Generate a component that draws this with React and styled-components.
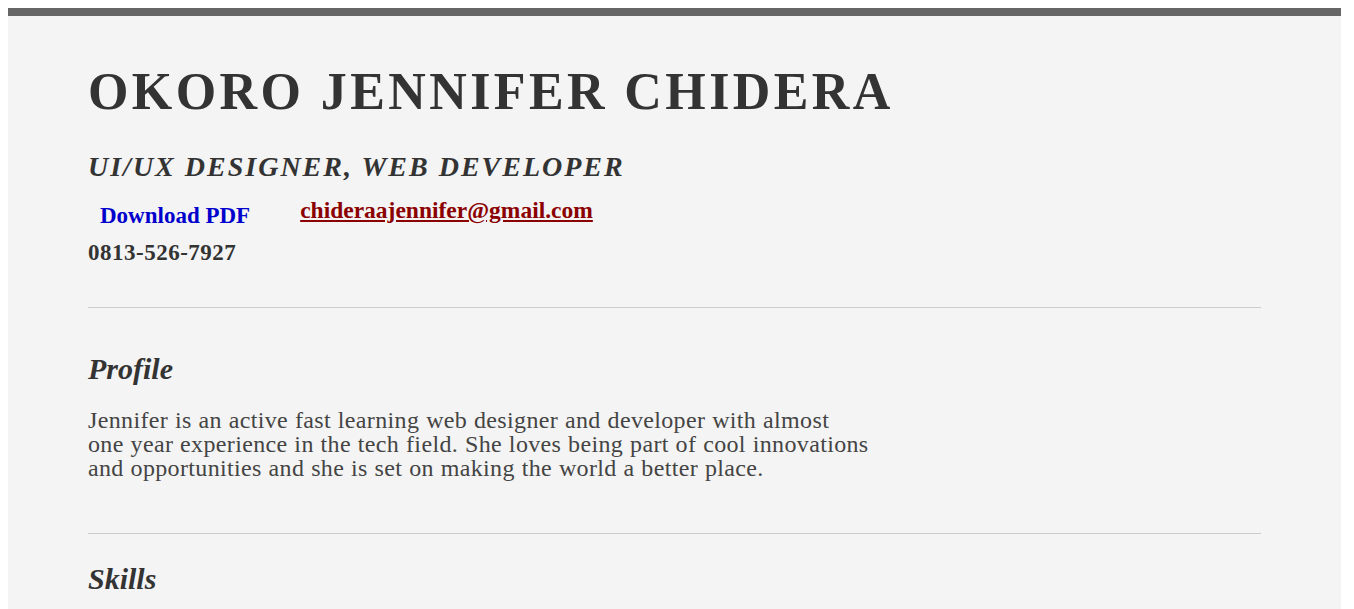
import React from 'react'
import styled, { createGlobalStyle } from 'styled-components'

const GlobalStyle = createGlobalStyle`
  html {
    background: #fff;
  }
  body {
    margin: 8px 0 0 8px;
    font-family: "Liberation Serif", "Times New Roman", serif;
    color: #333;
  }
`

const Page = styled.div`
  box-sizing: border-box;
  width: 1333px;
  min-height: 620px;
  background: #f4f4f4;
  border-top: 8px solid #666;
  padding: 45px 80px 60px;
`

const Name = styled.h1`
  margin: 0;
  font-size: 52px;
  line-height: 62px;
  font-weight: bold;
  letter-spacing: 3.4px;
  color: #333;
`

const Role = styled.h2`
  margin: 27px 0 0;
  font-size: 28px;
  line-height: 34px;
  font-style: italic;
  font-weight: bold;
  letter-spacing: 2px;
  color: #333;
`

const ContactRow = styled.div`
  display: flex;
  align-items: flex-start;
  margin-top: 12px;
`

const DownloadButton = styled.button`
  font-family: inherit;
  font-size: 23px;
  line-height: 28px;
  font-weight: bold;
  color: #0000cd;
  background: transparent;
  border: none;
  padding: 6px 12px 7px;
  margin-right: 38px;
  cursor: pointer;
`

const Email = styled.a`
  font-size: 23.5px;
  line-height: 28px;
  font-weight: bold;
  color: #8b0000;
  text-decoration: underline;
`

const Phone = styled.p`
  margin: 2px 0 0;
  font-size: 23px;
  line-height: 28px;
  font-weight: bold;
  letter-spacing: 0.5px;
  color: #333;
`

const Rule = styled.hr`
  border: none;
  border-top: 1px solid #ccc;
  margin: ${p => p.$top}px 0 0;
`

const SectionTitle = styled.h3`
  margin: ${p => p.$top}px 0 0;
  font-size: 30px;
  line-height: 36px;
  font-style: italic;
  font-weight: bold;
  color: #333;
`

const Text = styled.p`
  margin: 21px 0 0;
  font-size: 24px;
  line-height: 24px;
  letter-spacing: 0.35px;
  word-spacing: 0.5px;
  color: #444;
`

export default function App() {
  return (
    <>
      <GlobalStyle />
      <Page>
        <Name>OKORO JENNIFER CHIDERA</Name>
        <Role>UI/UX DESIGNER, WEB DEVELOPER</Role>
        <ContactRow>
          <DownloadButton type="button">Download PDF</DownloadButton>
          <Email href="mailto:chideraajennifer@gmail.com">chideraajennifer@gmail.com</Email>
        </ContactRow>
        <Phone>0813-526-7927</Phone>

        <Rule $top={40} />
        <SectionTitle $top={43}>Profile</SectionTitle>
        <Text>
          Jennifer is an active fast learning web designer and developer with almost<br />
          one year experience in the tech field. She loves being part of cool innovations<br />
          and opportunities and she is set on making the world a better place.
        </Text>

        <Rule $top={53} />
        <SectionTitle $top={27}>Skills</SectionTitle>
      </Page>
    </>
  )
}
